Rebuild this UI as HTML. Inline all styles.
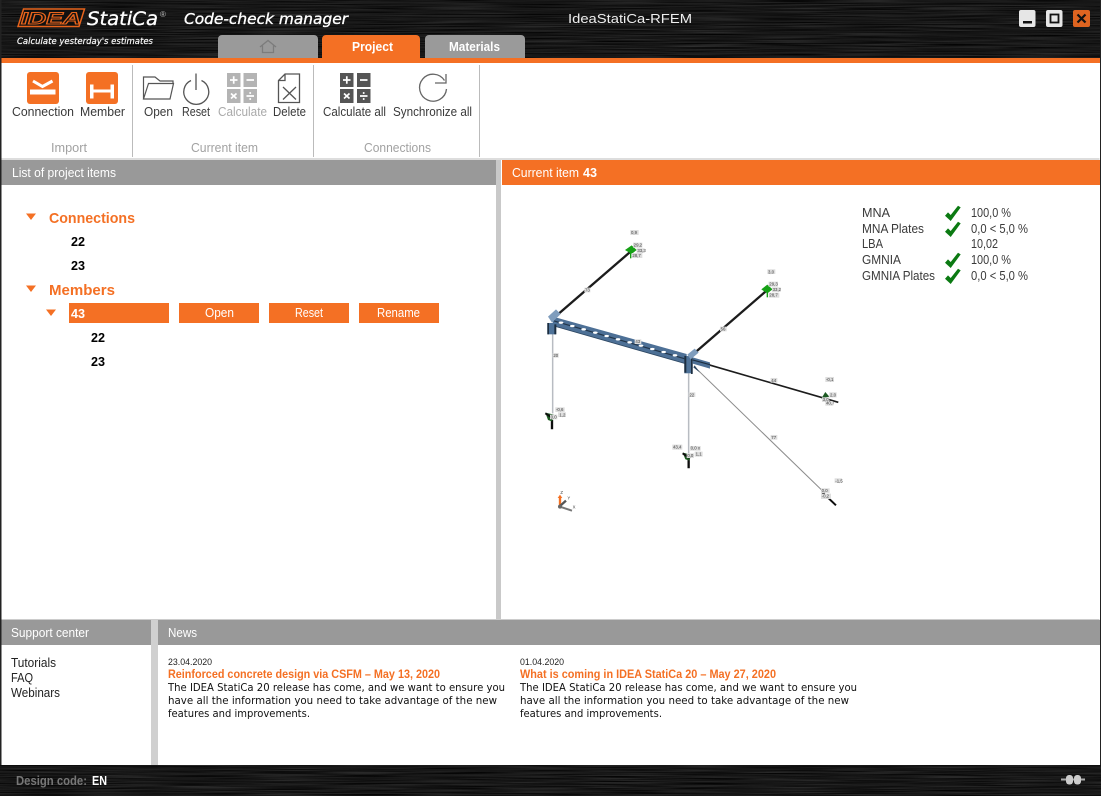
<!DOCTYPE html>
<html><head><meta charset="utf-8"><title>Code-check manager</title>
<style>
html,body{margin:0;padding:0;background:#fff;overflow:hidden}
svg{display:block}
text{font-family:"Liberation Sans",sans-serif;font-size:12.5px;fill:#3a3a3a}
.w{fill:#fff}
.o{fill:#f47024;font-weight:bold}
.g{fill:#a2a2a2}
.b{fill:#000;font-weight:bold}
.n{fill:#111;font-size:10.500px;font-family:"DejaVu Sans",sans-serif}
.t{fill:#f47024;font-size:12px;font-weight:bold}
.m text{font-size:13px;fill:#444}
</style></head><body>
<svg width="1101" height="796" viewBox="0 0 1101 796" xmlns="http://www.w3.org/2000/svg">
<defs>
<filter id="br" x="0" y="0" width="100%" height="100%" color-interpolation-filters="sRGB">
<feTurbulence type="fractalNoise" baseFrequency="0.012 0.9" numOctaves="2" seed="7"/>
<feColorMatrix type="matrix" values="0.28 0 0 0 -0.05 0.28 0 0 0 -0.05 0.28 0 0 0 -0.05 0 0 0 0 1"/>
</filter>
<filter id="bl"><feGaussianBlur stdDeviation="1"/></filter>
<path id="chk" d="M0 10L3 6.700L5.700 9.300L13 0L15.700 1.700L5.700 15.300Z" fill="#0b7a12"/>
<path id="tri" d="M0 0H10L5 6.500Z" fill="#f47024"/>
</defs>

<!-- Window / title bar -->
<rect width="1101" height="796" fill="#fff"/>
<rect width="1101" height="59" fill="#111"/>
<rect width="1101" height="59" filter="url(#br)"/>
<rect y="58" width="1101" height="5" fill="#f47024"/>
<rect y="0" width="1.500" height="796" fill="#222"/>
<rect x="1100" y="0" width="1" height="796" fill="#222"/>

<!-- Logo -->
<path d="M23.500 9H84.500L79 26.500H18Z" fill="#111" stroke="#e8641c" stroke-width="1.500"/>
<text x="21" y="24" textLength="60" lengthAdjust="spacingAndGlyphs" style="font-size:17px;font-weight:bold;font-style:italic;fill:#111;stroke:#e8641c;stroke-width:1">IDEA</text>
<text x="87" y="25" textLength="71" lengthAdjust="spacingAndGlyphs" class="w" style="font-size:19px;font-style:italic;stroke:#fff;stroke-width:.3;font-family:'DejaVu Sans',sans-serif">StatiCa</text>
<text x="160" y="17" class="w" style="font-size:8px;fill:#bbb">®</text>
<text x="184" y="24" textLength="164" lengthAdjust="spacingAndGlyphs" class="w" style="font-size:15px;font-style:italic;stroke:#fff;stroke-width:.35;font-family:'DejaVu Sans',sans-serif">Code-check manager</text>
<text x="17" y="44" textLength="136" lengthAdjust="spacingAndGlyphs" class="w" style="font-size:8.500px;font-style:italic;stroke:#fff;stroke-width:.15;font-family:'DejaVu Sans',sans-serif">Calculate yesterday's estimates</text>
<text x="568" y="23" textLength="124" lengthAdjust="spacingAndGlyphs" class="w" style="font-size:13px;fill:#eee">IdeaStatiCa-RFEM</text>

<!-- Window buttons -->
<rect x="1019" y="10" width="16.500" height="17" rx="2" fill="#e6e6e6"/>
<rect x="1023" y="21" width="9" height="2.500" fill="#111"/>
<rect x="1046" y="10" width="16.500" height="17" rx="2" fill="#e6e6e6"/>
<rect x="1050.500" y="14.500" width="8" height="8" fill="none" stroke="#111" stroke-width="1.800"/>
<rect x="1073" y="10" width="17" height="17" rx="2" fill="#df6420"/>
<path d="M1077.500 14.500L1085.500 22.500M1085.500 14.500L1077.500 22.500" stroke="#111" stroke-width="2.200"/>

<!-- Tabs -->
<path d="M218 58V39a4 4 0 0 1 4-4H314a4 4 0 0 1 4 4V58Z" fill="#9a9a9a"/>
<path d="M260 47L268 40.500L276 47M262.500 45.500V52.500H273.500V45.500" fill="none" stroke="#7c7c7c" stroke-width="1.300"/>
<path d="M322 58V39a4 4 0 0 1 4-4H416a4 4 0 0 1 4 4V58Z" fill="#f47024"/>
<text x="352" y="51" textLength="41" lengthAdjust="spacingAndGlyphs" class="w" style="font-weight:bold">Project</text>
<path d="M425 58V39a4 4 0 0 1 4-4H521a4 4 0 0 1 4 4V58Z" fill="#9a9a9a"/>
<text x="449" y="51" textLength="51" lengthAdjust="spacingAndGlyphs" class="w" style="font-weight:bold">Materials</text>

<!-- Toolbar separators -->
<rect x="132" y="65" width="1" height="92" fill="#bbb"/>
<rect x="313" y="65" width="1" height="92" fill="#bbb"/>
<rect x="479" y="65" width="1" height="92" fill="#bbb"/>
<rect x="1.500" y="158" width="1098" height="2" fill="#ddd"/>

<!-- Toolbar icons -->
<rect x="27" y="72" width="32" height="32" rx="3" fill="#f47024"/>
<path d="M33 81L42.500 86.500L52.500 81" fill="none" stroke="#fff" stroke-width="3"/>
<path d="M30 89.500H55.500V94.500H30Z" fill="#fff"/>
<rect x="86" y="72" width="32" height="32" rx="3" fill="#f47024"/>
<path d="M90 84.500H93.500V98.500H90ZM110.500 84.500H114V98.500H110.500ZM93 89.500H111V92.500H93Z" fill="#fff"/>

<path d="M143.500 99V77H155L160 81H173V84M143.500 99H170L173.500 83.500H148.500Z" fill="none" stroke="#555" stroke-width="1.200"/>
<path d="M191 80.500A12.500 12.500 0 1 0 201.500 80.500" fill="none" stroke="#555" stroke-width="1.300"/>
<path d="M196 73.500V90" stroke="#555" stroke-width="1.300"/>

<g fill="#b4b4b4">
<rect x="227" y="73" width="13.500" height="14"/><rect x="243.500" y="73" width="13.500" height="14"/>
<rect x="227" y="89" width="13.500" height="14"/><rect x="243.500" y="89" width="13.500" height="14"/>
</g>
<path d="M230 80H237.500M233.700 76.300V83.700M246.500 80H254M231 93.500L236.500 98.500M236.500 93.500L231 98.500M246.500 96H254" stroke="#fff" stroke-width="1.700" fill="none"/>
<circle cx="250.200" cy="93" r="1" fill="#fff"/><circle cx="250.200" cy="99" r="1" fill="#fff"/>

<path d="M285 74H299.500V102.500H278.500V80.500ZM285 74V80.500H278.500" fill="none" stroke="#555" stroke-width="1.300"/>
<path d="M283 87L296 99.500M296 87L283 99.500" stroke="#555" stroke-width="1.300"/>

<g fill="#555">
<rect x="340" y="73" width="13.500" height="14"/><rect x="357" y="73" width="13.500" height="14"/>
<rect x="340" y="89" width="13.500" height="14"/><rect x="357" y="89" width="13.500" height="14"/>
</g>
<path d="M343 80H350.500M346.800 76.300V83.700M360 80H367.500M344 93.500L349.500 98.500M349.500 93.500L344 98.500M360 96H367.500" stroke="#fff" stroke-width="1.700" fill="none"/>
<circle cx="363.700" cy="93" r="1" fill="#fff"/><circle cx="363.700" cy="99" r="1" fill="#fff"/>

<path d="M444.500 80.500A13.500 13.500 0 1 0 446.500 89" fill="none" stroke="#666" stroke-width="1.300"/>
<path d="M435 83H446V74" fill="none" stroke="#666" stroke-width="1.300"/>

<!-- Toolbar labels -->
<g>
<text x="12" y="116" textLength="62" lengthAdjust="spacingAndGlyphs">Connection</text>
<text x="80" y="116" textLength="45" lengthAdjust="spacingAndGlyphs">Member</text>
<text x="144" y="116" textLength="29" lengthAdjust="spacingAndGlyphs">Open</text>
<text x="182" y="116" textLength="28" lengthAdjust="spacingAndGlyphs">Reset</text>
<text x="218" y="116" textLength="49" lengthAdjust="spacingAndGlyphs" style="fill:#aaa">Calculate</text>
<text x="273" y="116" textLength="33" lengthAdjust="spacingAndGlyphs">Delete</text>
<text x="323" y="116" textLength="63" lengthAdjust="spacingAndGlyphs">Calculate all</text>
<text x="393" y="116" textLength="79" lengthAdjust="spacingAndGlyphs">Synchronize all</text>
<text x="51" y="152" textLength="36" lengthAdjust="spacingAndGlyphs" class="g">Import</text>
<text x="191" y="152" textLength="67" lengthAdjust="spacingAndGlyphs" class="g">Current item</text>
<text x="364" y="152" textLength="67" lengthAdjust="spacingAndGlyphs" class="g">Connections</text>
</g>

<!-- Panel headers -->
<rect x="1.500" y="160" width="494.500" height="25" fill="#999"/>
<text x="12" y="177" textLength="104" lengthAdjust="spacingAndGlyphs" class="w">List of project items</text>
<rect x="496" y="160" width="5" height="460" fill="#c9c9c9"/>
<rect x="502" y="160" width="598" height="25" fill="#f47024"/>
<text x="512" y="177" textLength="67" lengthAdjust="spacingAndGlyphs" class="w">Current item</text>
<text x="583" y="177" textLength="14" lengthAdjust="spacingAndGlyphs" class="w" style="font-weight:bold">43</text>

<!-- Tree -->
<use href="#tri" x="26" y="213.500"/>
<text x="49" y="223" textLength="86" lengthAdjust="spacingAndGlyphs" class="o" style="font-size:15px">Connections</text>
<text x="71" y="246" textLength="14" lengthAdjust="spacingAndGlyphs" class="b">22</text>
<text x="71" y="270" textLength="14" lengthAdjust="spacingAndGlyphs" class="b">23</text>
<use href="#tri" x="26" y="285.500"/>
<text x="49" y="295" textLength="66" lengthAdjust="spacingAndGlyphs" class="o" style="font-size:15px">Members</text>
<use href="#tri" x="46" y="309.500"/>
<rect x="69" y="303" width="100" height="20" fill="#f47024"/>
<text x="71" y="318" textLength="14" lengthAdjust="spacingAndGlyphs" class="w" style="font-weight:bold">43</text>
<rect x="179" y="303" width="80" height="20" fill="#f47024"/>
<text x="205" y="317" textLength="29" lengthAdjust="spacingAndGlyphs" class="w">Open</text>
<rect x="269" y="303" width="80" height="20" fill="#f47024"/>
<text x="295" y="317" textLength="28" lengthAdjust="spacingAndGlyphs" class="w">Reset</text>
<rect x="359" y="303" width="80" height="20" fill="#f47024"/>
<text x="377" y="317" textLength="43" lengthAdjust="spacingAndGlyphs" class="w">Rename</text>
<text x="91" y="342" textLength="14" lengthAdjust="spacingAndGlyphs" class="b">22</text>
<text x="91" y="366" textLength="14" lengthAdjust="spacingAndGlyphs" class="b">23</text>

<!-- Results -->
<text x="862" y="217" textLength="28" lengthAdjust="spacingAndGlyphs">MNA</text>
<text x="862" y="233" textLength="62" lengthAdjust="spacingAndGlyphs">MNA Plates</text>
<text x="862" y="248" textLength="21" lengthAdjust="spacingAndGlyphs">LBA</text>
<text x="862" y="264" textLength="39" lengthAdjust="spacingAndGlyphs">GMNIA</text>
<text x="862" y="280" textLength="73" lengthAdjust="spacingAndGlyphs">GMNIA Plates</text>
<text x="971" y="217" textLength="40" lengthAdjust="spacingAndGlyphs">100,0 %</text>
<text x="971" y="233" textLength="57" lengthAdjust="spacingAndGlyphs">0,0 &lt; 5,0 %</text>
<text x="971" y="248" textLength="27" lengthAdjust="spacingAndGlyphs">10,02</text>
<text x="971" y="264" textLength="40" lengthAdjust="spacingAndGlyphs">100,0 %</text>
<text x="971" y="280" textLength="57" lengthAdjust="spacingAndGlyphs">0,0 &lt; 5,0 %</text>
<use href="#chk" x="945" y="205.700"/>
<use href="#chk" x="945" y="221.700"/>
<use href="#chk" x="945" y="252.700"/>
<use href="#chk" x="945" y="268.700"/>

<!-- Structural model (drawn in a 3x local coordinate system) -->
<g class="m" transform="translate(530 220) scale(.3333)">
<g filter="url(#bl)">
<path d="M68 340V580M476 460V700" stroke="#b8bcc2" stroke-width="4.500" fill="none"/>
<path d="M495 442L875 810" stroke="#8c8c8c" stroke-width="3"/>
<path d="M875 815L918 856" stroke="#111" stroke-width="6"/>
<path d="M85 282L305 92M495 398L712 210" stroke="#1c1c1c" stroke-width="7"/>
<path d="M538 435L925 547" stroke="#1c1c1c" stroke-width="5"/>
<path d="M66 600V628M476 715V745" stroke="#111" stroke-width="7"/>

<path d="M62 288L470 402V432L72 318Z" fill="#4d7096"/>
<path d="M72 303L470 418" stroke="#22354a" stroke-width="3.500"/>
<path d="M72 318L470 432" stroke="#2c4560" stroke-width="2.500"/>
<g fill="#fff">
<ellipse cx="93" cy="308" rx="7" ry="3.500"/><ellipse cx="127" cy="318" rx="7" ry="3.500"/>
<ellipse cx="161" cy="328" rx="7" ry="3.500"/><ellipse cx="196" cy="338" rx="7" ry="3.500"/>
<ellipse cx="230" cy="348" rx="7" ry="3.500"/><ellipse cx="264" cy="358" rx="7" ry="3.500"/>
<ellipse cx="299" cy="367" rx="7" ry="3.500"/><ellipse cx="333" cy="377" rx="7" ry="3.500"/>
<ellipse cx="367" cy="387" rx="7" ry="3.500"/><ellipse cx="401" cy="396" rx="7" ry="3.500"/>
<ellipse cx="435" cy="406" rx="7" ry="3.500"/>
</g>
<rect x="52" y="309" width="26" height="34" fill="#4f7399"/>
<rect x="52" y="309" width="5" height="34" fill="#1f2f40"/><rect x="73" y="313" width="6" height="30" fill="#1f2f40"/>
<path d="M54 290L78 268L92 282L66 308Z" fill="#7f9dbd"/>
<rect x="463" y="408" width="25" height="52" fill="#4f7399"/>
<rect x="463" y="408" width="6" height="50" fill="#1f2f40"/><rect x="483" y="408" width="5" height="54" fill="#1f2f40"/>
<path d="M472 404L494 386L506 398L482 418Z" fill="#7f9dbd"/>
<path d="M488 412L540 427V446L488 431Z" fill="#4d7096"/>
<path d="M488 420L540 434" stroke="#1f2f40" stroke-width="3.500"/>
<path d="M510 458L494 436L490 442Z" fill="#2c4560"/>

<!-- Supports -->
<path d="M285 90L305 76L320 90L305 102Z" fill="#12a012"/><path d="M302 95V115" stroke="#12a012" stroke-width="4"/>
<path d="M694 208L712 194L728 208L712 220Z" fill="#12a012"/><path d="M712 212V232" stroke="#12a012" stroke-width="4"/>
<path d="M46 578L72 584L66 604L54 600Z" fill="#1d5a24"/><path d="M46 580L68 594" stroke="#111" stroke-width="6"/>
<path d="M458 698L484 704L478 722L466 718Z" fill="#1d5a24"/><path d="M458 700L478 714" stroke="#111" stroke-width="6"/>
<path d="M874 536L898 530L886 516Z" fill="#1d5a24"/>

<!-- Label chips -->
<g fill="#ddd">
<rect x="301" y="30" width="25" height="15"/><rect x="309" y="68" width="28" height="15"/><rect x="320" y="85" width="24" height="14"/><rect x="305" y="99" width="32" height="15"/>
<rect x="163" y="203" width="18" height="14"/><rect x="712" y="148" width="24" height="14"/><rect x="716" y="185" width="28" height="15"/><rect x="726" y="202" width="26" height="14"/><rect x="716" y="218" width="32" height="15"/>
<rect x="570" y="320" width="20" height="14"/><rect x="314" y="358" width="20" height="14"/><rect x="68" y="399" width="18" height="14"/>
<rect x="476" y="517" width="20" height="14"/><rect x="722" y="474" width="20" height="14"/><rect x="722" y="645" width="20" height="14"/>
<rect x="886" y="471" width="26" height="15"/><rect x="898" y="517" width="22" height="15"/><rect x="876" y="532" width="22" height="14"/><rect x="886" y="543" width="24" height="14"/>
<rect x="76" y="562" width="28" height="14"/><rect x="84" y="577" width="24" height="14"/><rect x="60" y="584" width="22" height="14"/>
<rect x="427" y="674" width="30" height="15"/><rect x="480" y="678" width="32" height="14"/><rect x="494" y="695" width="24" height="15"/><rect x="470" y="700" width="22" height="14"/>
<rect x="873" y="805" width="26" height="14"/><rect x="873" y="821" width="30" height="16"/><rect x="914" y="775" width="22" height="14"/>
</g>
<path d="M90 858L90 830" stroke="#f47024" stroke-width="7"/><path d="M83 834L90 824L97 834Z" fill="#f47024"/>
<path d="M90 858L108 842" stroke="#555" stroke-width="7"/><path d="M90 860L126 872" stroke="#777" stroke-width="6"/>
<circle cx="90" cy="860" r="6" fill="#666"/>
</g>
<text x="303" y="42">0,9</text><text x="311" y="79">29,2</text><text x="322" y="96">33,3</text><text x="307" y="111">28,7</text>
<text x="165" y="215">73</text><text x="714" y="160">3,0</text><text x="718" y="196">29,3</text><text x="728" y="213">33,2</text><text x="718" y="230">28,7</text>
<text x="572" y="332">56</text><text x="316" y="369">43</text><text x="70" y="411">20</text>
<text x="478" y="529">22</text><text x="724" y="486">44</text><text x="724" y="657">77</text>
<text x="888" y="483">-0,1</text><text x="900" y="529">2,0</text><text x="878" y="543">3,0</text><text x="888" y="554">40,7</text>
<text x="78" y="573">-0,6</text><text x="88" y="589">1,2</text><text x="62" y="595">0,0</text>
<text x="429" y="686">43,4</text><text x="482" y="689">0,0 x</text><text x="497" y="707">1,1</text><text x="472" y="711">0,0</text>
<text x="875" y="816">0,0</text><text x="875" y="833">-0,2</text><text x="916" y="787">-1,5</text>
<text x="91" y="822">Z</text><text x="112" y="838">Y</text><text x="128" y="866">X</text>
</g>

<!-- Bottom panels -->
<rect x="1.500" y="619" width="1098" height="1" fill="#ccc"/>
<rect x="1.500" y="620" width="149.500" height="25" fill="#999"/>
<rect x="151" y="620" width="7" height="145" fill="#d0d0d0"/>
<rect x="158" y="620" width="942" height="25" fill="#999"/>
<text x="11" y="637" textLength="78" lengthAdjust="spacingAndGlyphs" class="w">Support center</text>
<text x="168" y="637" textLength="29" lengthAdjust="spacingAndGlyphs" class="w">News</text>
<text x="11" y="667" textLength="45" lengthAdjust="spacingAndGlyphs" style="fill:#222">Tutorials</text>
<text x="11" y="682" textLength="22" lengthAdjust="spacingAndGlyphs" style="fill:#222">FAQ</text>
<text x="11" y="697" textLength="49" lengthAdjust="spacingAndGlyphs" style="fill:#222">Webinars</text>

<text x="168" y="665" textLength="44" lengthAdjust="spacingAndGlyphs" style="font-size:9.500px;fill:#222">23.04.2020</text>
<text x="168" y="678" textLength="272" lengthAdjust="spacingAndGlyphs" class="t">Reinforced concrete design via CSFM – May 13, 2020</text>
<text x="168" y="691" textLength="337" lengthAdjust="spacingAndGlyphs" class="n">The IDEA StatiCa 20 release has come, and we want to ensure you</text>
<text x="168" y="704" textLength="329" lengthAdjust="spacingAndGlyphs" class="n">have all the information you need to take advantage of the new</text>
<text x="168" y="717" textLength="142" lengthAdjust="spacingAndGlyphs" class="n">features and improvements.</text>

<text x="520" y="665" textLength="44" lengthAdjust="spacingAndGlyphs" style="font-size:9.500px;fill:#222">01.04.2020</text>
<text x="520" y="678" textLength="256" lengthAdjust="spacingAndGlyphs" class="t">What is coming in IDEA StatiCa 20 – May 27, 2020</text>
<text x="520" y="691" textLength="337" lengthAdjust="spacingAndGlyphs" class="n">The IDEA StatiCa 20 release has come, and we want to ensure you</text>
<text x="520" y="704" textLength="329" lengthAdjust="spacingAndGlyphs" class="n">have all the information you need to take advantage of the new</text>
<text x="520" y="717" textLength="142" lengthAdjust="spacingAndGlyphs" class="n">features and improvements.</text>

<!-- Footer -->
<rect y="765" width="1101" height="31" fill="#111"/>
<rect y="765" width="1101" height="31" filter="url(#br)"/>
<text x="16" y="785" textLength="71" lengthAdjust="spacingAndGlyphs" style="font-weight:bold;fill:#777">Design code:</text>
<text x="92" y="785" textLength="15" lengthAdjust="spacingAndGlyphs" class="w" style="font-weight:bold">EN</text>
<path d="M1061 779.500H1085" stroke="#aaa" stroke-width="2"/>
<rect x="1066" y="775" width="7" height="9.500" rx="3" fill="#ccc"/>
<rect x="1074" y="775" width="7" height="9.500" rx="3" fill="#ccc"/>
</svg>
</body></html>
